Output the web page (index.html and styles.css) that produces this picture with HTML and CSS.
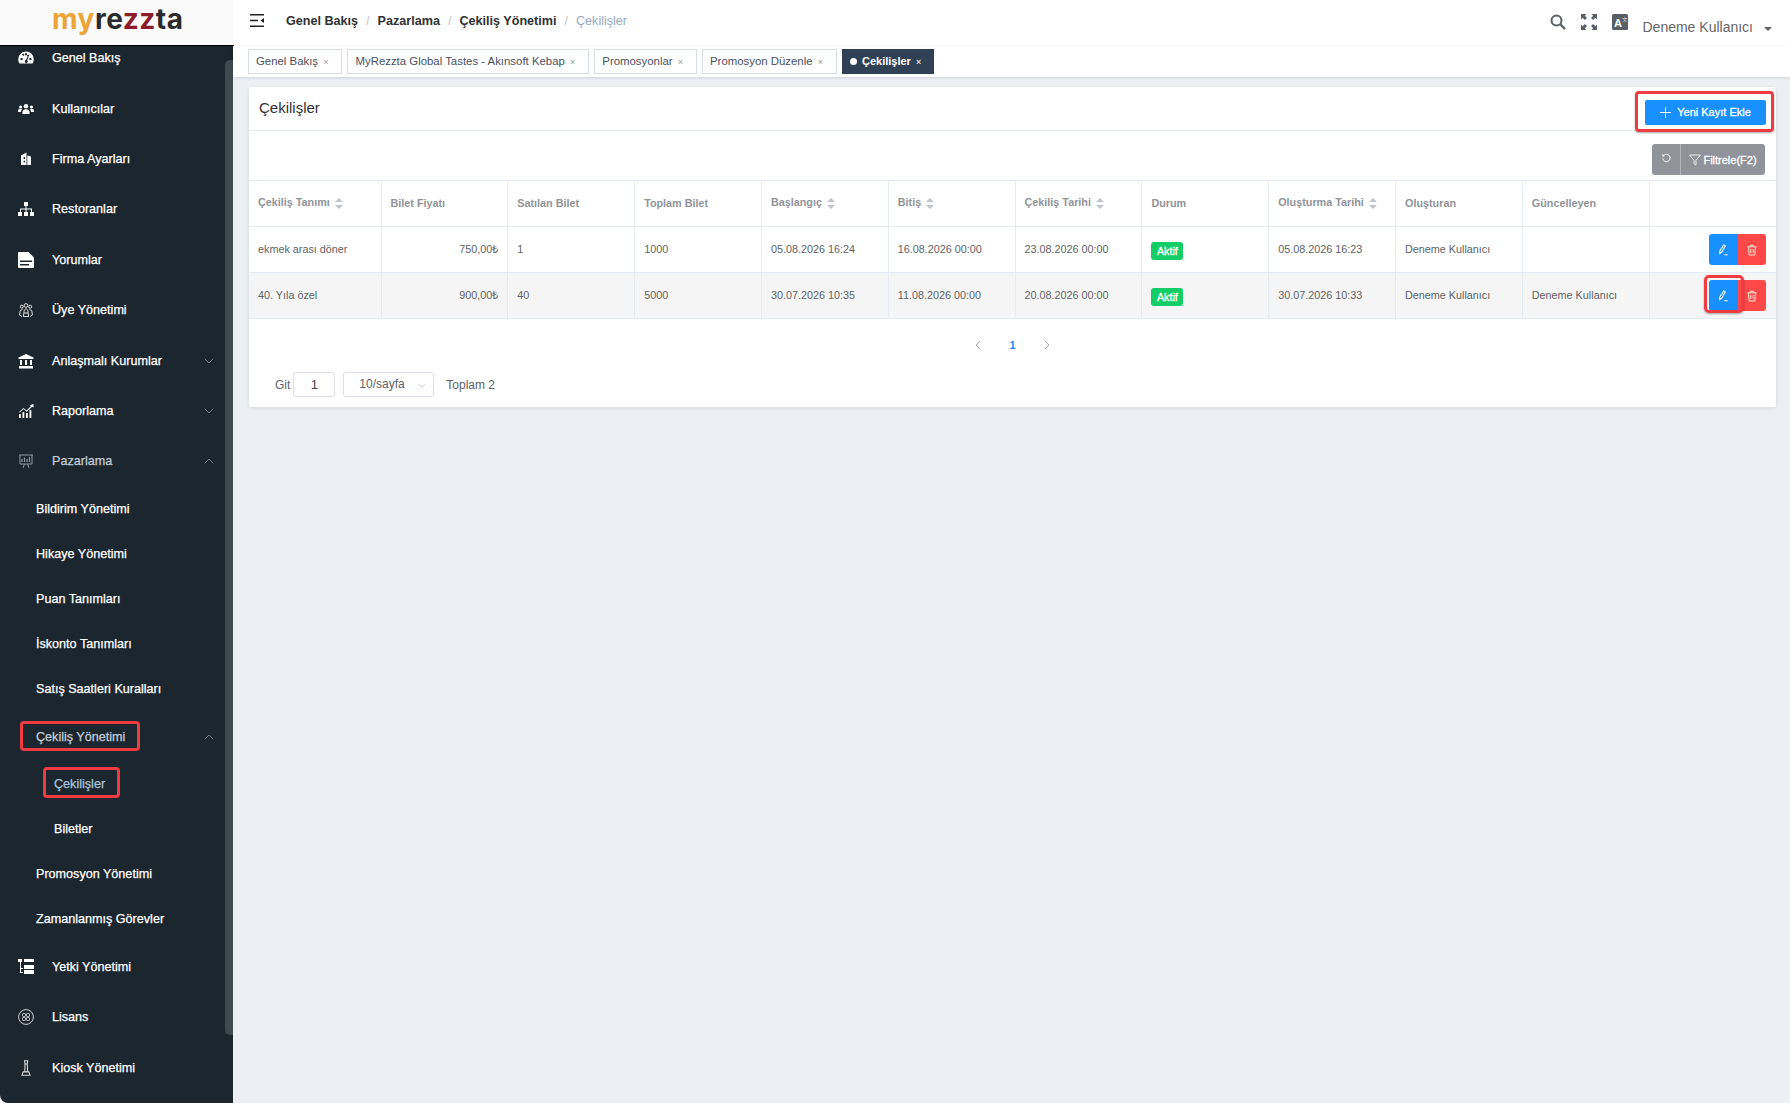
FILE: index.html
```html
<!DOCTYPE html>
<html lang="tr">
<head>
  <meta charset="UTF-8">
  <title>Çekilişler</title>
  <link rel="stylesheet" href="styles.css">
</head>
<body>
  <!-- sol menu -->
  <aside class="sidebar">
    <div class="logo"><span class="l-or">my</span><span class="l-dk">re</span><span class="l-rd">zz</span><span class="l-dk">ta</span></div>
    <div class="menu-scroll">
      <div class="thumb"></div>
      <ul class="menu">
        <li class="item">
          <svg class="ico" viewBox="0 0 16 16"><path fill="#fff" fill-rule="evenodd" d="M8 1.500A7.700 7.700 0 0 0 .2 9.200c0 1.600.4 3 1.200 4.300h13.200c.8-1.300 1.200-2.700 1.200-4.300A7.700 7.700 0 0 0 8 1.500zM7 3.200h2v2H7zM2.600 8h2v2h-2zM4 4.600l1.400-1 1.100 1.500-1.400 1zM11.400 8h2v2h-2zM10 4.600l1.400 1-1.200 1.500-1.400-1zM9.600 6.500l.9.4-1.300 3.400a1.500 1.500 0 1 1-1.200-.3z"/></svg>
          <span>Genel Bakış</span>
        </li>
        <li class="item">
          <svg class="ico" viewBox="0 0 16 16"><g fill="#fff"><circle cx="8" cy="5.200" r="2.300"/><circle cx="2.600" cy="6" r="1.600"/><circle cx="13.400" cy="6" r="1.600"/><path d="M4.400 13v-1.600c0-2 1.500-3.200 3.600-3.200s3.600 1.200 3.600 3.200V13zM0 11V9.500C0 8.300.9 8 2.600 8c.6 0 1 .1 1.400.3-.7.7-1 1.600-1 2.700zM16 11V9.500c0-1.200-.9-1.500-2.600-1.500-.6 0-1 .1-1.400.3.7.7 1 1.600 1 2.700z"/></g></svg>
          <span>Kullanıcılar</span>
        </li>
        <li class="item">
          <svg class="ico" viewBox="0 0 16 16"><path fill="#fff" fill-rule="evenodd" d="M3 14V4.500L8.500 1.500V14zM9.300 4.500l3.700 1V14H9.300zM5.600 6h1.400v2H5.600zM5.600 9.800h1.400v1.700H5.600z"/></svg>
          <span>Firma Ayarları</span>
        </li>
        <li class="item">
          <svg class="ico" viewBox="0 0 16 16"><g fill="#fff"><rect x="6" y="1" width="4" height="4"/><rect x="0" y="11" width="4" height="4"/><rect x="6" y="11" width="4" height="4"/><rect x="12" y="11" width="4" height="4"/><path d="M7.500 5h1v2.500H14V11h-1V8.500H8.500V11h-1V8.500H3V11H2V7.500h5.500z"/></g></svg>
          <span>Restoranlar</span>
        </li>
        <li class="item">
          <svg class="ico" viewBox="0 0 16 16"><path fill="#fff" fill-rule="evenodd" d="M1 0h9.500L16 5.500V15a1 1 0 0 1-1 1H1a1 1 0 0 1-1-1V1a1 1 0 0 1 1-1zM2 8.500v1.600h12V8.500zM2 12v1.600h9V12z"/></svg>
          <span>Yorumlar</span>
        </li>
        <li class="item">
          <svg class="ico" viewBox="0 0 16 16"><g fill="none" stroke="#fff" stroke-width=".85"><circle cx="8" cy="3.500" r="1.900"/><circle cx="3.800" cy="4.700" r="1.500"/><circle cx="12.200" cy="4.700" r="1.500"/><path d="M5.400 14.500l.8-6.200L8 6.600l1.800 1.700.8 6.200zM4.700 7.200L2.200 8.700 1.600 13l2.400 1.500M11.300 7.200l2.500 1.500.6 4.300-2.400 1.500M6 11h4"/></g></svg>
          <span>Üye Yönetimi</span>
        </li>
        <li class="item">
          <svg class="ico" viewBox="0 0 16 16"><path fill="#fff" d="M8 1l7.500 3.500V6H.5V4.500zM2 7h2v5H2zM7 7h2v5H7zM12 7h2v5h-2zM1 13h14v2.500H1z"/></svg>
          <span>Anlaşmalı Kurumlar</span>
          <svg class="arrow" viewBox="0 0 10 6"><path d="M.7.7L5 5l4.300-4.300"/></svg>
        </li>
        <li class="item">
          <svg class="ico" viewBox="0 0 16 16"><g fill="#fff"><rect x="1" y="11" width="1.800" height="4"/><rect x="4.500" y="9" width="1.800" height="6"/><rect x="8" y="10" width="1.800" height="5"/><rect x="11.500" y="7" width="1.800" height="8"/><path d="M1 9l4.500-4 3 2.500L13 3l-1.300-.8L15.500 1v3.600l-1.200-.9-5.700 5-3-2.600-4 3.300z"/></g></svg>
          <span>Raporlama</span>
          <svg class="arrow" viewBox="0 0 10 6"><path d="M.7.7L5 5l4.300-4.300"/></svg>
        </li>
        <li class="item open">
          <svg class="ico" viewBox="0 0 16 16"><g fill="none" stroke="#8e98a0"><path d="M1 2h14M2 2v9h12V2M5 15l1.500-4M11 15l-1.500-4"/><path d="M4 9V6M6.500 9V4.500M9 9V6M11.500 9V4" stroke-width="1.200"/></g></svg>
          <span>Pazarlama</span>
          <svg class="arrow" viewBox="0 0 10 6"><path d="M.7 5.300L5 1l4.300 4.300"/></svg>
        </li>
        <li class="sub">Bildirim Yönetimi</li>
        <li class="sub">Hikaye Yönetimi</li>
        <li class="sub">Puan Tanımları</li>
        <li class="sub">İskonto Tanımları</li>
        <li class="sub">Satış Saatleri Kuralları</li>
        <li class="sub-head open">
          <span class="mark">Çekiliş Yönetimi</span>
          <svg class="arrow" viewBox="0 0 10 6"><path d="M.7 5.300L5 1l4.300 4.300"/></svg>
        </li>
        <li class="sub2 current"><span class="mark">Çekilişler</span></li>
        <li class="sub2">Biletler</li>
        <li class="sub">Promosyon Yönetimi</li>
        <li class="sub">Zamanlanmış Görevler</li>
        <li class="item">
          <svg class="ico" viewBox="0 0 16 16"><g fill="#fff"><path d="M0 0h4v3H3v6h2v1H3v3h2v1H2V3H0z"/><rect x="6" y="0" width="10" height="3"/><rect x="6" y="6" width="10" height="4"/><rect x="6" y="11" width="10" height="4"/></g></svg>
          <span>Yetki Yönetimi</span>
        </li>
        <li class="item">
          <svg class="ico" viewBox="0 0 16 16"><circle cx="8" cy="8" r="7.400" fill="none" stroke="#fff" stroke-width=".8"/><g fill="none" stroke="#fff" stroke-width=".8"><rect x="4.500" y="4.500" width="3" height="3" rx="1"/><rect x="8.500" y="4.500" width="3" height="3" rx="1"/><rect x="4.500" y="8.500" width="3" height="3" rx="1"/><rect x="8.500" y="8.500" width="3" height="3" rx="1"/></g></svg>
          <span>Lisans</span>
        </li>
        <li class="item">
          <svg class="ico" viewBox="0 0 16 16"><g fill="none" stroke="#d8dadc" stroke-width="1.100"><path d="M6.500.8h3.200L9.300 4H7zM7 4l-.2 7.500M9.300 4l.3 7.500M5 11.800h6M4 15.200l1-3.200h6l1 3.200z"/></g></svg>
          <span>Kiosk Yönetimi</span>
        </li>
      </ul>
    </div>
  </aside>

  <div class="main">
    <header class="navbar">
      <svg class="burger" viewBox="0 0 14 13"><path d="M0 .7h14M0 6.500h8M0 12.300h14" stroke="#222" stroke-width="1.400" fill="none"/><path d="M14 4l-3.500 2.500L14 9z" fill="#222"/></svg>
      <nav class="crumbs">
        <a>Genel Bakış</a><i>/</i><a>Pazarlama</a><i>/</i><a>Çekiliş Yönetimi</a><i>/</i><b>Çekilişler</b>
      </nav>
      <div class="nav-right">
        <svg class="tool" viewBox="0 0 16 16"><circle cx="6.500" cy="6.500" r="5" fill="none" stroke="#5a5e66" stroke-width="2"/><path d="M10.500 10.500L15 15" stroke="#5a5e66" stroke-width="2.400"/></svg>
        <svg class="tool" viewBox="0 0 16 16"><g fill="#5a5e66"><path d="M0 0h5.500L3.800 1.700 6 3.900 3.900 6 1.700 3.800 0 5.500zM16 0v5.500l-1.700-1.700L12.100 6 10 3.900l2.200-2.200L10.500 0zM0 16v-5.500l1.700 1.700L3.900 10 6 12.100l-2.200 2.200L5.500 16zM16 16h-5.500l1.700-1.700L10 12.100l2.100-2.100 2.200 2.200 1.700-1.700z"/></g></svg>
        <svg class="tool" viewBox="0 0 16 16"><rect width="16" height="16" rx="1.500" fill="#5a5e66"/><text x="2" y="13" class="lang-a">A</text><text x="10.300" y="7" class="lang-z">文</text></svg>
        <div class="user">Deneme Kullanıcı</div>
        <span class="caret"></span>
      </div>
    </header>

    <div class="tags">
      <span class="tag">Genel Bakış <em>×</em></span>
      <span class="tag">MyRezzta Global Tastes - Akınsoft Kebap <em>×</em></span>
      <span class="tag">Promosyonlar <em>×</em></span>
      <span class="tag">Promosyon Düzenle <em>×</em></span>
      <span class="tag active"><u></u>Çekilişler <em>×</em></span>
    </div>

    <section class="content">
      <div class="card">
        <div class="card-head">
          <h2>Çekilişler</h2>
          <button class="btn-add mark-add">
            <svg viewBox="0 0 11 11"><path d="M5.500 0v11M0 5.500h11" stroke="#fff" fill="none"/></svg>
            Yeni Kayıt Ekle
          </button>
        </div>
        <div class="filter-row">
          <div class="filter-group">
            <button class="btn-reset"><svg viewBox="0 0 12 12"><path d="M2.800 3A4 4 0 1 1 2 6" stroke="#fff" fill="none" stroke-width="1"/><path d="M1.500 1.200L4.300 3.300 1.500 4.200z" fill="#fff"/></svg></button>
            <button class="btn-filter"><svg viewBox="0 0 12 12"><path d="M.6 1h10.800L7 6.300V11L5 9.800V6.300z" stroke="#fff" fill="none" stroke-width=".8"/></svg>Filtrele(F2)</button>
          </div>
        </div>
        <table class="grid">
          <thead>
            <tr>
              <th>Çekiliş Tanımı <span class="sort"></span></th>
              <th>Bilet Fiyatı</th>
              <th>Satılan Bilet</th>
              <th>Toplam Bilet</th>
              <th>Başlangıç <span class="sort"></span></th>
              <th>Bitiş <span class="sort"></span></th>
              <th>Çekiliş Tarihi <span class="sort"></span></th>
              <th>Durum</th>
              <th>Oluşturma Tarihi <span class="sort"></span></th>
              <th>Oluşturan</th>
              <th>Güncelleyen</th>
              <th></th>
            </tr>
          </thead>
          <tbody>
            <tr>
              <td>ekmek arası döner</td>
              <td class="num">750,00₺</td>
              <td>1</td>
              <td>1000</td>
              <td>05.08.2026 16:24</td>
              <td>16.08.2026 00:00</td>
              <td>23.08.2026 00:00</td>
              <td><span class="badge">Aktif</span></td>
              <td>05.08.2026 16:23</td>
              <td>Deneme Kullanıcı</td>
              <td></td>
              <td class="acts">
                <button class="act edit"><svg viewBox="0 0 12 12"><path d="M6.800 1l1.500 1-3.500 6.200-2 1.300-.1-2.300zM7.300 10.800h3.500" stroke="#fff" fill="none" stroke-width="1.100"/></svg></button><button class="act del"><svg viewBox="0 0 12 12"><path d="M1.500 2.800h9M4.500 2.500V1.200h3v1.300M2.500 3l.6 8h5.800l.6-8M4.800 5v4M7.200 5v4" stroke="#ffe9d6" fill="none"/></svg></button>
              </td>
            </tr>
            <tr class="hover">
              <td>40. Yıla özel</td>
              <td class="num">900,00₺</td>
              <td>40</td>
              <td>5000</td>
              <td>30.07.2026 10:35</td>
              <td>11.08.2026 00:00</td>
              <td>20.08.2026 00:00</td>
              <td><span class="badge">Aktif</span></td>
              <td>30.07.2026 10:33</td>
              <td>Deneme Kullanıcı</td>
              <td>Deneme Kullanıcı</td>
              <td class="acts">
                <button class="act edit mark-edit"><svg viewBox="0 0 12 12"><path d="M6.800 1l1.500 1-3.500 6.200-2 1.300-.1-2.300zM7.300 10.800h3.500" stroke="#fff" fill="none" stroke-width="1.100"/></svg></button><button class="act del"><svg viewBox="0 0 12 12"><path d="M1.500 2.800h9M4.500 2.500V1.200h3v1.300M2.500 3l.6 8h5.800l.6-8M4.800 5v4M7.200 5v4" stroke="#ffe9d6" fill="none"/></svg></button>
              </td>
            </tr>
          </tbody>
        </table>
        <div class="pager">
          <svg viewBox="0 0 6 10"><path d="M5 1L1 5l4 4"/></svg>
          <b>1</b>
          <svg viewBox="0 0 6 10"><path d="M1 1l4 4-4 4"/></svg>
        </div>
        <div class="pager-foot">
          <span>Git</span>
          <span class="go">1</span>
          <span class="size">10/sayfa<svg viewBox="0 0 10 6"><path d="M1 1l4 4 4-4"/></svg></span>
          <span class="total">Toplam 2</span>
        </div>
      </div>
    </section>
  </div>
</body>
</html>
```

FILE: styles.css
```css
* {margin:0; padding:0; box-sizing:border-box;}
html,body {height:100%; overflow:hidden;}
body {
  display:flex; background:#fff; color:#606266;
  font-family:"Liberation Sans", Arial, sans-serif;
}

/* sidebar */
.sidebar {
  width:233px; flex:none; height:100%; display:flex; flex-direction:column;
  background:#1c262e; border-bottom-left-radius:8px;
}
.logo {
  height:46px; flex:none; background:#fafafa; border-bottom:1px solid #000;
  width:234px; position:relative; z-index:2;
  padding-left:52px;
  font:700 28px/39px Inter, "Liberation Sans", sans-serif; letter-spacing:.5px;
}
.l-or {color:#eba537;}
.l-dk {color:#2b2b2b;}
.l-rd {color:#8c1d2a;}
.menu-scroll {flex:1; overflow:hidden; position:relative;}
.thumb {
  position:absolute; right:0; top:14px; width:8px; height:975px;
  background:#3f4a50; border-radius:5px 0 0 5px;
}
.menu {list-style:none; margin-top:-13px; color:#fff; font-size:12.6px; -webkit-text-stroke:.25px;}
.item {height:50.4px; display:flex; align-items:center; padding-left:18px; position:relative;}
.item > span {margin-left:18px;}
.ico {width:16px; height:16px; flex:none;}
.item.open, .sub-head.open {color:#c3ced9;}
.arrow {
  position:absolute; left:204px; top:50%; margin-top:-3px; width:10px; height:6px;
  fill:none; stroke:#6d777e; stroke-width:1;
}
.sub {height:45px; line-height:45px; padding-left:36px;}
.sub-head {height:50.4px; display:flex; align-items:center; padding-left:36px; position:relative;}
.sub2 {height:45px; line-height:45px; padding-left:54px;}
.sub2.current {color:#a9c4dd;}
.mark {position:relative;}
.mark::after {
  content:""; position:absolute; border:3px solid #ef3b42; border-radius:4px;
  left:-16px; right:-15px; top:-9px; bottom:-7px;
}
.sub2 .mark::after {left:-11px; right:-15px; top:-10px; bottom:-7px;}

/* navbar */
.main {flex:1; min-width:0; height:100%; display:flex; flex-direction:column; background:#ecf0f5;}
.navbar {
  height:46px; flex:none; background:#fff; display:flex; align-items:center;
  padding:0 0 5px 17px; box-shadow:0 1px 3px rgba(0,21,41,.06); position:relative;
}
.burger {width:14px; height:13px; flex:none;}
.crumbs {margin-left:22px; font-size:12.6px; color:#303133; display:flex;}
.crumbs a {font-weight:700;}
.crumbs i {font-style:normal; color:#c0c4cc; margin:0 8px;}
.crumbs b {font-weight:400; color:#97a8be;}
.nav-right {margin-left:auto; display:flex; align-items:flex-start; align-self:stretch;}
.tool {width:16px; height:16px; margin:14px 15px 0 0;}
.lang-a {font:700 11px "Liberation Sans", sans-serif; fill:#fff;}
.lang-z {font:5px "Noto Sans CJK SC", sans-serif; fill:#ddd;}
.user {font-size:14px; color:#666; margin:19px 0 0 -1px;}
.caret {
  margin:27px 18px 0 11px; border:4px solid transparent; border-top-color:#606266;
  border-bottom:0;
}

/* tags */
.tags {
  height:31px; flex:none; background:#fff; display:flex; gap:5px; padding:3px 0 0 15px;
  box-shadow:0 1px 3px rgba(0,0,0,.12); position:relative;
}
.tag {
  height:25px; line-height:23px; padding:0 13px 0 7px; border:1px solid #d8dce5;
  font-size:11.4px; color:#495060; background:#fff; white-space:nowrap;
}
.tag em {font-style:normal; font-size:9px; color:#999; margin-left:2px;}
.tag.active {background:#304156; border-color:#304156; color:#fff; font-size:11px; font-weight:700; padding-right:12px;}
.tag.active em {color:#ddd;}
.tag u {display:inline-block; width:7px; height:7px; border-radius:50%; background:#fff; margin-right:5px; vertical-align:0;}

/* content */
.content {flex:1; padding:10px 14px 0 16px;}
.card {background:#fff; box-shadow:0 1px 4px rgba(0,0,0,.1); height:320px; border-radius:2px;}
.card-head {
  height:44px; border-bottom:1px solid #e6ebf1; display:flex; align-items:center;
  justify-content:space-between; padding:0 10px;
}
.card-head h2 {font-size:15px; font-weight:400; color:#303133; margin-bottom:2px;}
button {font-family:inherit; border:0; cursor:pointer;}
.btn-add {
  width:121px; height:25px; background:#1890ff; color:#fff; border-radius:2px;
  font-size:11px; -webkit-text-stroke:.3px; display:flex; align-items:center; justify-content:center; gap:6px;
  position:relative; margin-top:7px;
}
.btn-add svg {width:11px; height:11px;}
.mark-add::after, .mark-edit::after {
  content:""; position:absolute; border:3px solid #ef3b42; border-radius:4px;
  box-shadow:0 1px 2px rgba(0,0,0,.35);
}
.mark-add::after {left:-10px; right:-8px; top:-9px; bottom:-7px;}
.filter-row {height:49px; display:flex; justify-content:flex-end; align-items:flex-start; padding:13px 11px 0 0;}
.filter-group {display:flex;}
.filter-group button {height:31px; background:#909399; color:#fff; font-size:11px; -webkit-text-stroke:.3px;}
.btn-reset {width:29px; border-radius:3px 0 0 3px; border-right:1px solid #b4b6ba !important;}
.btn-reset svg {width:11px; height:11px;}
.btn-filter {width:84px; border-radius:0 3px 3px 0; display:flex; align-items:center; justify-content:center; gap:2px;}
.btn-filter svg {width:12px; height:12px;}
.grid {width:100%; border-collapse:collapse; table-layout:fixed; font-size:10.8px;}
.grid th, .grid td {
  border:1px solid #e6ebf1; height:46px; padding:0 9px 2px; text-align:left; white-space:nowrap;
}
.grid th:first-child {width:132px;}
.grid th:first-child, .grid td:first-child {border-left:0;}
.grid th:last-child, .grid td:last-child {border-right:0;}
.grid th {color:#909399; font-weight:700;}
.grid td {color:#606266;}
.grid .num {text-align:right;}
.hover td {background:#f5f5f5;}
.sort {display:inline-block; width:8px; height:11px; vertical-align:middle; margin-left:2px; position:relative;}
.sort::before, .sort::after {
  content:""; position:absolute; left:0; border:4px solid transparent;
}
.sort::before {top:-4px; border-bottom-color:#c0c4cc;}
.sort::after {bottom:-4px; border-top-color:#c0c4cc;}
.badge {
  display:inline-block; width:32px; height:18px; line-height:18px; background:#13ce66;
  color:#fff; -webkit-text-stroke:.3px; text-align:center; border-radius:3px; vertical-align:middle; margin-top:4px;
}
.grid .acts {text-align:right; font-size:0; padding:0 10px 0 0;}
.act {width:28.5px; height:31px; vertical-align:middle; position:relative;}
.act svg {width:12px; height:12px; vertical-align:middle;}
.edit {background:#1890ff; border-radius:3px 0 0 3px;}
.del {background:#ff4949; border-radius:0 3px 3px 0;}
.mark-edit {z-index:1;}
.mark-edit::after {left:-5px; right:-6px; top:-5px; bottom:-2px; border-radius:5px;}

/* pagination */
.pager {
  display:flex; justify-content:center; align-items:center; gap:28px; height:52px;
  font-size:11px; color:#1890ff;
}
.pager svg {width:6px; height:10px; fill:none; stroke:#a8abb2;}
.pager-foot {
  display:flex; align-items:center; padding-left:26px; font-size:12px; color:#606266;
  height:25px; margin-top:1px;
}
.go {
  width:42px; height:25px; line-height:23px; border:1px solid #dcdfe6; border-radius:3px;
  text-align:center; margin-left:3px; color:#444; font-size:13px;
}
.size {
  width:91px; height:25px; line-height:23px; border:1px solid #dcdfe6; border-radius:3px;
  margin-left:8px; padding-left:15px; position:relative;
}
.size svg {position:absolute; right:7px; top:10px; width:8px; height:5px; fill:none; stroke:#c0c4cc;}
.total {margin-left:12px;}
```
